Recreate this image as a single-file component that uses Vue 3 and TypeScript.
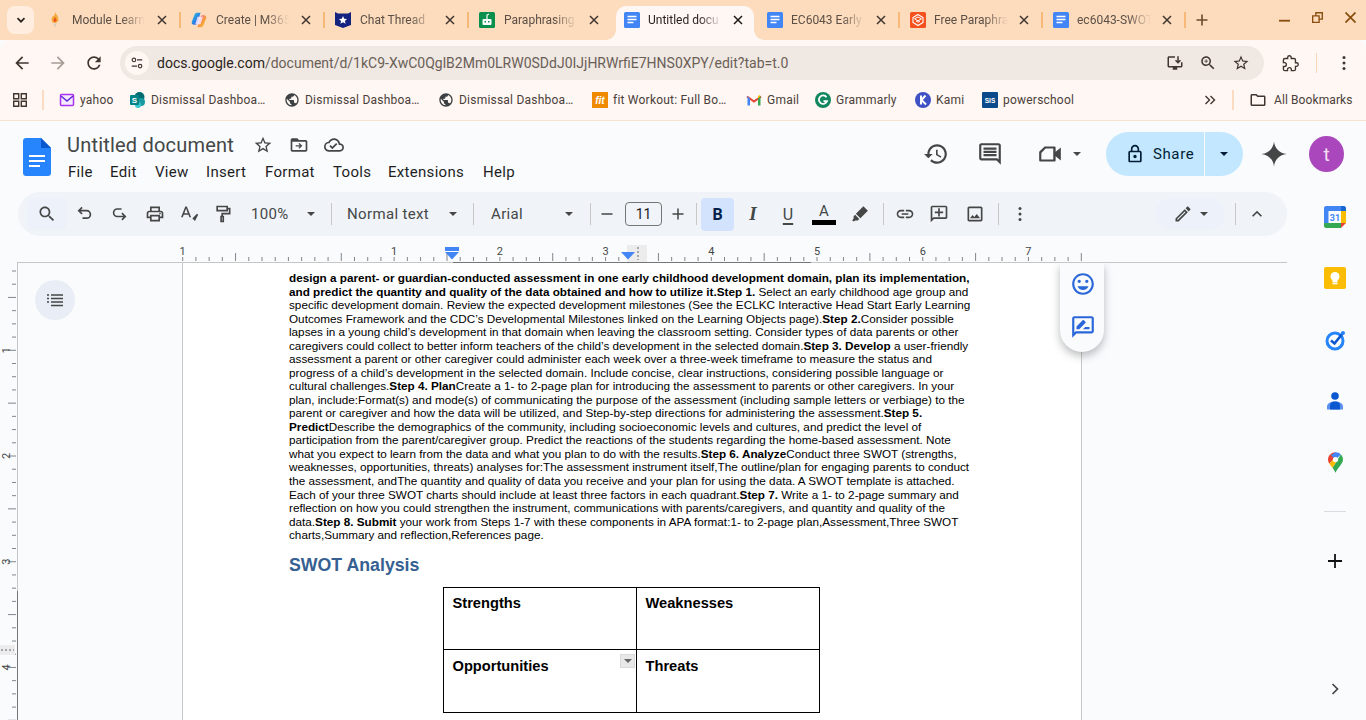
<script setup lang="ts">
const P = {
  back: 'M20 11H7.83l5.59-5.59L12 4l-8 8 8 8 1.41-1.41L7.83 13H20v-2z',
  fwd: 'M12 4l-1.41 1.41L16.17 11H4v2h12.17l-5.58 5.59L12 20l8-8z',
  reload: 'M17.65 6.35C16.2 4.9 14.21 4 12 4c-4.42 0-7.99 3.58-7.99 8s3.57 8 7.99 8c3.73 0 6.84-2.55 7.73-6h-2.08c-.82 2.33-3.04 4-5.65 4-3.31 0-6-2.69-6-6s2.69-6 6-6c1.66 0 3.14.69 4.22 1.78L13 11h7V4l-2.35 2.35z',
  star: 'M22 9.24l-7.19-.62L12 2 9.19 8.63 2 9.24l5.46 4.73L5.82 21 12 17.27 18.18 21l-1.63-7.03L22 9.24zM12 15.4l-3.76 2.27 1-4.28-3.32-2.88 4.38-.38L12 6.1l1.71 4.04 4.38.38-3.32 2.88 1 4.28L12 15.4z',
  search: 'M15.5 14h-.79l-.28-.27C15.41 12.59 16 11.11 16 9.5 16 5.91 13.09 3 9.5 3S3 5.91 3 9.5 5.91 16 9.5 16c1.61 0 3.09-.59 4.23-1.57l.27.28v.79l5 4.99L20.49 19l-4.99-5zm-6 0C7.01 14 5 11.99 5 9.5S7.01 5 9.5 5 14 7.01 14 9.5 11.99 14 9.5 14z',
  print: 'M19 8h-1V3H6v5H5c-1.66 0-3 1.34-3 3v6h4v4h12v-4h4v-6c0-1.66-1.34-3-3-3zM8 5h8v3H8V5zm8 12v2H8v-4h8v2zm2-2v-2H6v2H4v-4c0-.55.45-1 1-1h14c.55 0 1 .45 1 1v4h-2z',
  spell: 'M12.45 16h2.09L9.43 3H7.57L2.46 16h2.09l1.12-3h5.64l1.14 3zm-6.02-5L8.5 5.48 10.57 11H6.43zm15.16.59l-8.09 8.09L17.5 16l-1.41 1.41 3.09 3.09L23 13l-1.41-1.41z',
  link: 'M3.9 12c0-1.71 1.39-3.1 3.1-3.1h4V7H7c-2.76 0-5 2.24-5 5s2.24 5 5 5h4v-1.9H7c-1.71 0-3.1-1.39-3.1-3.1zM8 13h8v-2H8v2zm9-6h-4v1.9h4c1.71 0 3.1 1.39 3.1 3.1s-1.39 3.1-3.1 3.1h-4V17h4c2.76 0 5-2.24 5-5s-2.24-5-5-5z',
  addc: 'M2 4c0-1.1.9-2 2-2h16c1.1 0 2 .9 2 2v12c0 1.1-.9 2-2 2H6l-4 4V4zm2 13.17L5.17 16H20V4H4v13.17zM13 5h-2v4H7v2h4v4h2v-4h4V9h-4z',
  image: 'M19 5v14H5V5h14m0-2H5c-1.1 0-2 .9-2 2v14c0 1.1.9 2 2 2h14c1.1 0 2-.9 2-2V5c0-1.1-.9-2-2-2zm-4.86 8.86l-3 3.87L9 13.14 6 17h12l-3.86-5.14z',
  edit: 'M3 17.25V21h3.75L17.81 9.94l-3.75-3.75L3 17.25zM5.92 19H5v-.92l9.06-9.06.92.92L5.92 19zM20.71 5.63l-2.34-2.34c-.2-.2-.45-.29-.71-.29s-.51.1-.7.29l-1.83 1.83 3.75 3.75 1.83-1.83c.39-.39.39-1.02 0-1.41z',
  up: 'M12 8l-6 6 1.41 1.41L12 10.83l4.59 4.58L18 14z',
  history: 'M13 3c-4.97 0-9 4.03-9 9H1l3.89 3.89.07.14L9 12H6c0-3.87 3.13-7 7-7s7 3.13 7 7-3.13 7-7 7c-1.93 0-3.68-.79-4.94-2.06l-1.42 1.42C8.27 19.99 10.51 21 13 21c4.97 0 9-4.03 9-9s-4.03-9-9-9zm-1 5v5l4.28 2.54.72-1.21-3.5-2.08V8H12z',
  comment: 'M21.99 4c0-1.1-.89-2-1.99-2H4c-1.1 0-2 .9-2 2v12c0 1.1.9 2 2 2h14l4 4-.01-18zM20 4v13.17L18.83 16H4V4h16zM6 12h12v2H6zm0-3h12v2H6zm0-3h12v2H6z',
  lock: 'M18 8h-1V6c0-2.76-2.24-5-5-5S7 3.24 7 6v2H6c-1.1 0-2 .9-2 2v10c0 1.1.9 2 2 2h12c1.1 0 2-.9 2-2V10c0-1.1-.9-2-2-2zM9 6c0-1.66 1.34-3 3-3s3 1.34 3 3v2H9V6zm9 14H6V10h12v10zm-6-3c1.1 0 2-.9 2-2s-.9-2-2-2-2 .9-2 2 .9 2 2 2z',
  gem: 'M12 2C12.5 7.5 16.5 11.5 22 12 16.5 12.5 12.5 16.5 12 22 11.5 16.5 7.5 12.5 2 12 7.5 11.5 11.5 7.5 12 2z',
  folderMove: 'M20 6h-8l-2-2H4c-1.1 0-2 .9-2 2v12c0 1.1.9 2 2 2h16c1.1 0 2-.9 2-2V8c0-1.1-.9-2-2-2zm0 12H4V8h16v10zM12.5 9.5l-1.1 1.1 1.6 1.6H8v1.6h5l-1.6 1.6 1.1 1.1 3.5-3.5z',
  cloud: 'M19.35 10.04C18.67 6.59 15.64 4 12 4 9.11 4 6.6 5.64 5.35 8.04 2.34 8.36 0 10.91 0 14c0 3.31 2.69 6 6 6h13c2.76 0 5-2.24 5-5 0-2.64-2.05-4.78-4.65-4.96zM19 18H6c-2.21 0-4-1.79-4-4 0-2.05 1.53-3.76 3.56-3.97l1.07-.11.5-.95C8.08 7.14 9.94 6 12 6c2.62 0 4.88 1.86 5.39 4.43l.3 1.5 1.53.11c1.56.1 2.78 1.41 2.78 2.96 0 1.65-1.35 3-3 3zm-9-1l6.01-6.01-1.41-1.41L10 14.18l-2.09-2.09L6.5 13.5z',
  emoji: 'M11.99 2C6.47 2 2 6.48 2 12s4.47 10 9.99 10C17.52 22 22 17.52 22 12S17.52 2 11.99 2zM12 20c-4.42 0-8-3.58-8-8s3.58-8 8-8 8 3.58 8 8-3.58 8-8 8zm3.5-9c.83 0 1.5-.67 1.5-1.5S16.33 8 15.5 8 14 8.67 14 9.5s.67 1.5 1.5 1.5zm-7 0c.83 0 1.5-.67 1.5-1.5S9.33 8 8.5 8 7 8.67 7 9.5 7.67 11 8.5 11zm3.5 6.5c2.33 0 4.31-1.46 5.11-3.5H6.89c.8 2.04 2.78 3.5 5.11 3.5z',
  review: 'M20 2H4c-1.1 0-2 .9-2 2v18l4-4h14c1.1 0 2-.9 2-2V4c0-1.1-.9-2-2-2zm0 14H5.17L4 17.17V4h16v12zM6 14v-2.5l5.9-5.9c.2-.2.5-.2.7 0l1.8 1.8c.2.2.2.5 0 .7L8.5 14H6zm6 0l2-2h4v2h-6z',
  globe: 'M12 2C6.48 2 2 6.48 2 12s4.48 10 10 10 10-4.48 10-10S17.52 2 12 2zm-1 17.93c-3.95-.49-7-3.85-7-7.93 0-.62.08-1.21.21-1.79L9 15v1c0 1.1.9 2 2 2v1.93zm6.9-2.54c-.26-.81-1-1.39-1.9-1.39h-1v-3c0-.55-.45-1-1-1H8v-2h2c.55 0 1-.45 1-1V7h2c1.1 0 2-.9 2-2v-.41c2.93 1.19 5 4.06 5 7.41 0 2.08-.8 3.97-2.1 5.39z',
  bmFolder: 'M20 6h-8l-2-2H4c-1.1 0-2 .9-2 2v12c0 1.1.9 2 2 2h16c1.1 0 2-.9 2-2V8c0-1.1-.9-2-2-2zm0 12H4V6h5.17l2 2H20v10z',
  install: 'M20 3H4c-1.1 0-2 .9-2 2v11c0 1.1.9 2 2 2h5v3h6v-3h5c1.1 0 2-.9 2-2v-5h-2v5H4V5h8V3h8zm-4 10l4-4-1.4-1.4L17 9.2V3h-2v6.2l-1.6-1.6L12 9z',
  zoom: 'M15.5 14h-.79l-.28-.27C15.41 12.59 16 11.11 16 9.5 16 5.91 13.09 3 9.5 3S3 5.91 3 9.5 5.91 16 9.5 16c1.61 0 3.09-.59 4.23-1.57l.27.28v.79l5 4.99L20.49 19l-4.99-5zm-6 0C7.01 14 5 11.99 5 9.5S7.01 5 9.5 5 14 7.01 14 9.5 11.99 14 9.5 14zM12 10h-2v2H9v-2H7V9h2V7h1v2h2v1z',
}

interface Tab { title: string; icon: string; active?: boolean; sep: boolean }
const tabs: Tab[] = [
  { title: 'Module Learn', icon: 'flame', sep: true },
  { title: 'Create | M365', icon: 'copilot', sep: true },
  { title: 'Chat Thread', icon: 'shield', sep: true },
  { title: 'Paraphrasing', icon: 'robot', sep: false },
  { title: 'Untitled docu', icon: 'doc', active: true, sep: false },
  { title: 'EC6043 Early', icon: 'doc', sep: true },
  { title: 'Free Paraphra', icon: 'free', sep: true },
  { title: 'ec6043-SWOT', icon: 'doc', sep: true },
]

interface Bm { label: string; icon: string; w: number }
const bookmarks: Bm[] = [
  { label: 'yahoo', icon: 'mail', w: 71 },
  { label: 'Dismissal Dashboa…', icon: 'sp', w: 154 },
  { label: 'Dismissal Dashboa…', icon: 'globe', w: 154 },
  { label: 'Dismissal Dashboa…', icon: 'globe', w: 154 },
  { label: 'fit Workout: Full Bo…', icon: 'fit', w: 154 },
  { label: 'Gmail', icon: 'gmail', w: 69 },
  { label: 'Grammarly', icon: 'gram', w: 100 },
  { label: 'Kami', icon: 'kami', w: 67 },
  { label: 'powerschool', icon: 'sis', w: 100 },
]

const menu = [
  { t: 'File', w: 42 }, { t: 'Edit', w: 45 }, { t: 'View', w: 51 }, { t: 'Insert', w: 59 },
  { t: 'Format', w: 68 }, { t: 'Tools', w: 55 }, { t: 'Extensions', w: 95 }, { t: 'Help', w: 40 },
]

const STEP = 13.215
const hTicks = Array.from({ length: 69 }, (_, k) => ({
  x: 182.7 + STEP * k,
  tall: k % 4 === 0 && k % 8 !== 0,
  label: k % 8 === 0 && k !== 8 ? String(Math.abs(k / 8 - 1)) : '',
}))
const vTicks = Array.from({ length: 35 }, (_, k) => ({
  y: 8 + STEP * k,
  tall: (k + 2) % 4 === 0,
  label: (k + 2) % 8 === 0 ? String((k + 2) / 8) : '',
}))

const raw = [
  '*design a parent- or guardian-conducted assessment in one early childhood development domain, plan its implementation,*',
  '*and predict the quantity and quality of the data obtained and how to utilize it.Step 1.* Select an early childhood age group and',
  'specific development domain. Review the expected development milestones (See the ECLKC Interactive Head Start Early Learning',
  'Outcomes Framework and the CDC’s Developmental Milestones linked on the Learning Objects page).*Step 2.*Consider possible',
  'lapses in a young child’s development in that domain when leaving the classroom setting. Consider types of data parents or other',
  'caregivers could collect to better inform teachers of the child’s development in the selected domain.*Step 3. Develop* a user-friendly',
  'assessment a parent or other caregiver could administer each week over a three-week timeframe to measure the status and',
  'progress of a child’s development in the selected domain. Include concise, clear instructions, considering possible language or',
  'cultural challenges.*Step 4. Plan*Create a 1- to 2-page plan for introducing the assessment to parents or other caregivers. In your',
  'plan, include:Format(s) and mode(s) of communicating the purpose of the assessment (including sample letters or verbiage) to the',
  'parent or caregiver and how the data will be utilized, and Step-by-step directions for administering the assessment.*Step 5.*',
  '*Predict*Describe the demographics of the community, including socioeconomic levels and cultures, and predict the level of',
  'participation from the parent/caregiver group. Predict the reactions of the students regarding the home-based assessment. Note',
  'what you expect to learn from the data and what you plan to do with the results.*Step 6. Analyze*Conduct three SWOT (strengths,',
  'weaknesses, opportunities, threats) analyses for:The assessment instrument itself,The outline/plan for engaging parents to conduct',
  'the assessment, andThe quantity and quality of data you receive and your plan for using the data. A SWOT template is attached.',
  'Each of your three SWOT charts should include at least three factors in each quadrant.*Step 7.* Write a 1- to 2-page summary and',
  'reflection on how you could strengthen the instrument, communications with parents/caregivers, and quantity and quality of the',
  'data.*Step 8. Submit* your work from Steps 1-7 with these components in APA format:1- to 2-page plan,Assessment,Three SWOT',
  'charts,Summary and reflection,References page.',
]
const lines = raw.map((l) => l.split('*').map((t, i) => ({ t, b: i % 2 === 1 })))
</script>

<template>
  <div class="root">
    <!-- Browser tab strip -->
    <div class="strip">
      <div class="tabmenu">
        <svg viewBox="0 0 12 12" class="s12"><path d="M2.5 4.2 6 7.7l3.5-3.5" fill="none" stroke="#2b2320" stroke-width="1.7" /></svg>
      </div>
      <div v-for="(t, i) in tabs" :key="t.title" class="tab" :class="{ active: t.active, sep: t.sep, narrow: i > 4, lead: i < 4 }">
        <svg v-if="t.icon === 'flame'" class="fav" viewBox="0 0 16 16">
          <path d="M8.500 0c.3 2.400 2.900 3.800 2.900 7.200A3.400 3.400 0 0 1 8 11 3.500 3.500 0 0 1 4.600 7.300c0-1.500.9-2.200 1.200-3.300C6.900 4.600 8 2.600 8.500 0z" fill="#f5ab3c" />
          <path d="M8 4.800c.3 1.200 1.500 1.900 1.500 3.500A1.500 1.500 0 0 1 8 9.900a1.600 1.600 0 0 1-1.500-1.700C6.500 6.800 7.700 6.200 8 4.800z" fill="#e8571f" />
          <path d="M6 11.500h4L8 15.500z" fill="#d9cdbd" />
        </svg>
        <svg v-else-if="t.icon === 'copilot'" class="fav" viewBox="0 0 16 16">
          <defs>
            <linearGradient id="cpa" x1="0" y1="0" x2="1" y2="1"><stop offset="0" stop-color="#28c8d8" /><stop offset=".6" stop-color="#2f7be8" /><stop offset="1" stop-color="#7a5cf0" /></linearGradient>
            <linearGradient id="cpb" x1="0" y1="0" x2="1" y2="1"><stop offset="0" stop-color="#ef5fa8" /><stop offset=".55" stop-color="#f79a3c" /><stop offset="1" stop-color="#f7d23c" /></linearGradient>
          </defs>
          <path d="M3.600 2.500C4 1.300 5 .8 6 .8h3.500L6.500 11c-.4 1.200-1.200 1.800-2.300 1.800H3C1.300 12.800.3 11.300.8 9.700z" fill="url(#cpa)" />
          <path d="M12.400 13.500c-.4 1.200-1.400 1.700-2.400 1.700H6.500L9.500 5c.4-1.200 1.200-1.800 2.300-1.800H13c1.700 0 2.700 1.500 2.200 3.100z" fill="url(#cpb)" />
          <path d="M6.500 4.800h5.500l-2.500 7.500H4.300z" fill="#f4e6ff" opacity=".85" />
        </svg>
        <svg v-else-if="t.icon === 'shield'" class="fav" viewBox="0 0 16 16">
          <path d="M0 0l3 1.500h10L16 0v13l-8 3-8-3z" fill="#14237f" />
          <path d="M8 4l1.200 2.700 2.900.3-2.200 1.900.7 2.900L8 10.300l-2.600 1.500.7-2.900L3.900 7l2.900-.3z" fill="#fff" />
        </svg>
        <svg v-else-if="t.icon === 'robot'" class="fav" viewBox="0 0 16 16">
          <rect width="16" height="16" rx="1.500" fill="#0b8f4d" />
          <rect x="3.500" y="7" width="9" height="6" rx="1" fill="#fff" />
          <rect x="5.500" y="9" width="1.500" height="1.500" fill="#0b8f4d" /><rect x="9" y="9" width="1.500" height="1.500" fill="#0b8f4d" />
          <path d="M8 7V3l2-1" stroke="#fff" stroke-width="1.200" fill="none" />
        </svg>
        <svg v-else-if="t.icon === 'free'" class="fav" viewBox="0 0 16 16">
          <rect width="16" height="16" rx="1.500" fill="#f4511e" />
          <path d="M8 2.500 13 5.500v5L8 13.500 3 10.500v-5z" fill="none" stroke="#fff" stroke-width="1.100" />
          <path d="M4.500 6.800 8 5l3.500 1.800L8 8.800zM6 9l2 1.200L10 9" fill="none" stroke="#fff" stroke-width="1" />
        </svg>
        <svg v-else class="fav" viewBox="0 0 16 16">
          <rect width="16" height="16" rx="1.500" y="0" fill="#4285f4" />
          <path d="M3.500 4.500h9M3.500 7.500h9M3.500 10.500h6" stroke="#fff" stroke-width="1.500" />
        </svg>
        <span class="ttl">{{ t.title }}</span>
        <svg class="x" viewBox="0 0 10 10"><path d="M1 1l8 8M9 1l-8 8" stroke="currentColor" stroke-width="1.500" /></svg>
      </div>
      <svg class="newtab" viewBox="0 0 12 12"><path d="M6 .5v11M.5 6h11" stroke="#6b4a2c" stroke-width="1.600" /></svg>
      <div class="winctl">
        <svg viewBox="0 0 12 12" class="w11"><path d="M0 9.500h12" stroke="#8a4f10" stroke-width="2" /></svg>
        <svg viewBox="0 0 12 12" class="w11"><path d="M3.500 0H12v8.500H8.500V12H0V3.500h3.500zM5 1.500v2h3.500v3.500H10.500V1.500zM1.500 5v5.500H7V5z" fill="#8a4f10" fill-rule="evenodd" /></svg>
        <svg viewBox="0 0 12 12" class="w11"><path d="M.5.5l11 11M11.500.5l-11 11" stroke="#8a4f10" stroke-width="1.900" /></svg>
      </div>
    </div>

    <!-- Address bar -->
    <div class="nav">
      <svg class="i20 c-nav first" viewBox="0 0 24 24"><path :d="P.back" /></svg>
      <svg class="i20 c-dim" viewBox="0 0 24 24"><path :d="P.fwd" /></svg>
      <svg class="i20 c-nav" viewBox="0 0 24 24"><path :d="P.reload" /></svg>
      <div class="omni">
        <span class="tune">
          <svg viewBox="0 0 16 16" class="s14"><circle cx="4.500" cy="4.500" r="2" fill="none" stroke="#3f3630" stroke-width="1.300" /><path d="M8 4.500h6M2 11.500h6" stroke="#3f3630" stroke-width="1.300" /><circle cx="11.500" cy="11.500" r="2" fill="none" stroke="#3f3630" stroke-width="1.300" /></svg>
        </span>
        <span class="url"><span class="dom">docs.google.com</span>/document/d/1kC9-XwC0QglB2Mm0LRW0SDdJ0IJjHRWrfiE7HNS0XPY/edit?tab=t.0</span>
        <svg class="i18 c-nav" viewBox="0 0 24 24"><path :d="P.install" /></svg>
        <svg class="i18 c-nav oi" viewBox="0 0 24 24"><path :d="P.zoom" /></svg>
        <svg class="i18 c-nav oi" viewBox="0 0 24 24"><path :d="P.star" /></svg>
      </div>
      <svg class="ext" viewBox="0 0 24 24"><path d="M20.500 11H19V7c0-1.100-.9-2-2-2h-4V3.500C13 2.120 11.880 1 10.500 1S8 2.120 8 3.500V5H4c-1.100 0-2 .9-2 2v3.800h1.500c1.490 0 2.700 1.210 2.700 2.700s-1.210 2.700-2.700 2.700H2V20c0 1.100.9 2 2 2h3.800v-1.500c0-1.490 1.210-2.700 2.700-2.700s2.700 1.210 2.700 2.700V22H17c1.100 0 2-.9 2-2v-4h1.500c1.380 0 2.500-1.120 2.500-2.500S21.880 11 20.500 11z" fill="none" stroke="#3f3630" stroke-width="1.900" /></svg>
      <span class="navsep"></span>
      <svg class="dots" viewBox="0 0 4 16"><circle cx="2" cy="2.500" r="1.500" /><circle cx="2" cy="8" r="1.500" /><circle cx="2" cy="13.500" r="1.500" /></svg>
    </div>

    <!-- Bookmarks -->
    <div class="bm">
      <svg class="apps" viewBox="0 0 14 14"><path d="M.7.7h5v5h-5zM8.300.7h5v5h-5zM.7 8.300h5v5h-5zM8.300 8.300h5v5h-5z" fill="none" stroke="#3f3630" stroke-width="1.400" /></svg>
      <span class="bmsep s1"></span>
      <div v-for="(b, i) in bookmarks" :key="i" class="bmi" :style="{ width: b.w + 'px' }">
        <svg v-if="b.icon === 'mail'" class="fav" viewBox="0 0 16 16"><rect x="1.500" y="2.500" width="13" height="11" rx="1" fill="#f6eaff" stroke="#a933f0" stroke-width="1.500" /><path d="M2 4l6 5 6-5" fill="none" stroke="#5f2bd8" stroke-width="1.500" /></svg>
        <svg v-else-if="b.icon === 'sp'" class="fav" viewBox="0 0 16 16"><circle cx="9.500" cy="5" r="5" fill="#036c70" /><circle cx="11" cy="10" r="4" fill="#1a9ba1" /><circle cx="8" cy="13" r="3" fill="#37c6d0" /><rect y="3" width="9" height="10" rx="1" fill="#038387" /><text x="4.500" y="11" text-anchor="middle" class="svgs">S</text></svg>
        <svg v-else-if="b.icon === 'globe'" class="fav" viewBox="0 0 24 24"><path :d="P.globe" fill="#3c4043" /></svg>
        <svg v-else-if="b.icon === 'fit'" class="fav" viewBox="0 0 16 16"><rect width="16" height="16" fill="#f08a00" /><text x="8" y="12" text-anchor="middle" class="svgfit">fit</text></svg>
        <svg v-else-if="b.icon === 'gmail'" class="fav" viewBox="0 0 16 16"><path d="M1 4.500 8 9.500l7-5" fill="none" stroke="#ea4335" stroke-width="2" /><path d="M1.500 4v9.500h2.500V6.500z" fill="#4285f4" /><path d="M14.500 4v9.500H12V6.500z" fill="#34a853" /><path d="M12 6.500 14.500 4l-1-1L12 4z" fill="#fbbc04" /></svg>
        <svg v-else-if="b.icon === 'gram'" class="fav" viewBox="0 0 16 16"><circle cx="8" cy="8" r="8" fill="#11865f" /><path d="M11.500 5.200A4.200 4.200 0 1 0 12 9.200H8.500" fill="none" stroke="#fff" stroke-width="1.800" /></svg>
        <svg v-else-if="b.icon === 'kami'" class="fav" viewBox="0 0 16 16"><circle cx="8" cy="8" r="8" fill="#3f51c4" /><path d="M6 3.500v9M10.500 3.500 6.500 8l4.500 4.500" fill="none" stroke="#fff" stroke-width="2" /></svg>
        <svg v-else class="fav" viewBox="0 0 16 16"><rect width="16" height="16" rx="1" fill="#0b4a8a" /><text x="8" y="11" text-anchor="middle" class="svgsis">SIS</text></svg>
        <span class="bml">{{ b.label }}</span>
      </div>
      <svg class="more" viewBox="0 0 12 10"><path d="M1.500 1l4 4-4 4M6.500 1l4 4-4 4" fill="none" stroke="#3f3630" stroke-width="1.400" /></svg>
      <span class="bmsep s2"></span>
      <svg class="i18 c-nav" viewBox="0 0 24 24"><path :d="P.bmFolder" /></svg>
      <span class="bml all">All Bookmarks</span>
    </div>

    <!-- Docs title area -->
    <header class="head">
      <svg class="logo" viewBox="0 0 28 38">
        <path d="M18 0H3C1.300 0 0 1.300 0 3v32c0 1.700 1.300 3 3 3h22c1.700 0 3-1.300 3-3V10z" fill="#2684fc" />
        <path d="M18 0v10h10z" fill="#0b57d0" />
        <path d="M6 17h16v2H6zM6 22h16v2H6zM6 27h11v2H6z" fill="#fff" />
      </svg>
      <div class="titles">
        <div class="trow">
          <span class="title">Untitled document</span>
          <svg class="i20 c-g" viewBox="0 0 24 24"><path :d="P.star" /></svg>
          <svg class="i20 c-g folder" viewBox="0 0 24 24"><path :d="P.folderMove" /></svg>
          <svg class="i20 c-g cloud" viewBox="0 0 24 24"><path :d="P.cloud" /></svg>
        </div>
        <nav class="menu">
          <span v-for="m in menu" :key="m.t" :style="{ width: m.w + 'px' }">{{ m.t }}</span>
        </nav>
      </div>
      <div class="hright">
        <svg class="i26 c-g" viewBox="0 0 24 24"><path :d="P.history" /></svg>
        <svg class="i26 c-g hc" viewBox="0 0 24 24"><path :d="P.comment" /></svg>
        <svg class="i26 c-g hm" viewBox="0 0 24 24"><path d="M7 5H16c.7 0 1.200.5 1.200 1.200V10L22 6v12l-4.800-4v3.800c0 .7-.5 1.200-1.200 1.200H3.200C2.500 19 2 18.500 2 17.800V10zM8 7 4 11v6h11V7z" fill-rule="evenodd" /></svg>
        <span class="caret hcar"></span>
        <div class="share">
          <div class="sh-main">
            <svg class="i20 c-sh" viewBox="0 0 24 24"><path :d="P.lock" /></svg>
            <span>Share</span>
          </div>
          <div class="sh-arrow"><span class="caret dark"></span></div>
        </div>
        <svg class="gem c-g" viewBox="0 0 24 24"><path :d="P.gem" /></svg>
        <div class="avatar">t</div>
      </div>
    </header>

    <div class="workspace">
      <div class="main">
        <!-- Formatting toolbar -->
        <div class="toolbar">
          <div class="b w40 hl"><svg class="i20 c-g" viewBox="0 0 24 24"><path :d="P.search" /></svg></div>
          <div class="b w36"><svg class="i20" viewBox="0 0 24 24"><path class="ln" d="M8.500 4 4.500 8l4 4M4.500 8H14a4.500 4.500 0 0 1 0 9h-5" /></svg></div>
          <div class="b w32"><svg class="i20" viewBox="0 0 24 24"><path class="ln" d="M15.500 9l4 4-4 4M19.500 13H10a4.500 4.500 0 0 1 0-9h5" transform="translate(0 2)" /></svg></div>
          <div class="b w40"><svg class="i20 c-g" viewBox="0 0 24 24"><path :d="P.print" /><circle cx="18" cy="11.500" r="1" /></svg></div>
          <div class="b w28"><svg class="i20 c-g" viewBox="0 0 24 24"><path :d="P.spell" /></svg></div>
          <div class="b w40"><svg class="i20" viewBox="0 0 24 24"><path class="ln" d="M5 3h12v5H5zM17 5.500h3v6h-9V15M9.700 15h2.600v6H9.700z" /></svg></div>
          <span class="lbl zoomv">100%</span>
          <span class="caret c1"></span>
          <span class="sep a1"></span>
          <span class="lbl style">Normal text</span>
          <span class="caret c2"></span>
          <span class="sep a2"></span>
          <span class="lbl font">Arial</span>
          <span class="caret c3"></span>
          <span class="sep a3"></span>
          <div class="b w20 m6"><svg class="s12" viewBox="0 0 12 12"><path d="M.5 6h11" stroke="#444746" stroke-width="1.500" /></svg></div>
          <div class="fsize">11</div>
          <div class="b w20 m6"><svg class="s12" viewBox="0 0 12 12"><path d="M.5 6h11M6 .5v11" stroke="#444746" stroke-width="1.500" /></svg></div>
          <span class="sep m8"></span>
          <div class="bold">B</div>
          <div class="b w34 m2 glyph it">I</div>
          <div class="b w34 m1 glyph un">U</div>
          <div class="b w34 m2 colorA"><span>A</span><i></i></div>
          <div class="b w34 m2"><svg class="i18 c-g" viewBox="0 0 24 24"><path d="M16.500 1.500 22.500 7.500 12.500 17.500 6.500 11.500zM5.500 13l5.500 5.500-2 2H5.500L4 22l-2.500-1.500L3.500 18v-3z" /></svg></div>
          <span class="sep m6"></span>
          <div class="b w34 m4"><svg class="i20 c-g" viewBox="0 0 24 24"><path :d="P.link" /></svg></div>
          <div class="b w34"><svg class="i20 c-g" viewBox="0 0 24 24"><path :d="P.addc" /></svg></div>
          <div class="b w34 m2"><svg class="i20 c-g" viewBox="0 0 24 24"><path :d="P.image" /></svg></div>
          <span class="sep m6"></span>
          <div class="b w34 m4"><svg class="dots tbdots" viewBox="0 0 4 16"><circle cx="2" cy="2.500" r="1.500" /><circle cx="2" cy="8" r="1.500" /><circle cx="2" cy="13.500" r="1.500" /></svg></div>
          <div class="mode">
            <svg class="i20 c-g" viewBox="0 0 24 24"><path :d="P.edit" /></svg>
            <span class="caret"></span>
          </div>
          <span class="sep m10"></span>
          <div class="b w34 m4"><svg class="i20 c-g" viewBox="0 0 24 24"><path :d="P.up" /></svg></div>
        </div>

        <!-- Horizontal ruler -->
        <div class="hruler">
          <svg width="1287" height="18" viewBox="0 0 1287 18">
            <line x1="17" y1="17.500" x2="1287" y2="17.500" stroke="#c7c7c7" />
            <line x1="453" y1="17.500" x2="811" y2="17.500" stroke="#747775" />
            <g v-for="t in hTicks" :key="t.x">
              <line :x1="t.x" :x2="t.x" :y1="t.tall ? 8 : 12" y2="16" stroke="#80868b" />
              <text v-if="t.label" :x="t.x" y="10" text-anchor="middle" class="rnum">{{ t.label }}</text>
            </g>
            <path d="M445 2h14v4h-14z" fill="#4285f4" />
            <path d="M445 7h14l-7 7.500z" fill="#4285f4" />
            <rect x="627" y="0" width="20" height="17" fill="#ececec" />
            <path d="M638 2v13" stroke="#5f6368" stroke-dasharray="2 2" />
            <path d="M621 7h14l-7 7.500z" fill="#4285f4" />
          </svg>
        </div>

        <div class="canvas">
          <div class="vruler">
            <svg width="18" height="457" viewBox="0 0 18 457">
              <line x1="17.500" y1="0" x2="17.500" y2="457" stroke="#c7c7c7" />
              <line x1="17.500" y1="328" x2="17.500" y2="457" stroke="#747775" />
              <g v-for="t in vTicks" :key="t.y">
                <line :y1="t.y" :y2="t.y" :x1="t.tall ? 8 : 12" x2="16" stroke="#80868b" />
                <text v-if="t.label" x="10" :y="t.y" text-anchor="middle" class="rnum" :transform="`rotate(-90 10 ${t.y})`">{{ t.label }}</text>
              </g>
              <rect x="0" y="382" width="15" height="10" fill="#ececec" />
              <path d="M1 387h13" stroke="#5f6368" stroke-dasharray="2 2" />
            </svg>
          </div>
          <div class="gutter">
            <div class="outline">
              <svg viewBox="0 0 18 14" class="olic"><path d="M5 2h12M5 5.500h12M5 9h12M5 12.500h12" stroke="#444746" stroke-width="1.500" /><path d="M1 2h2M1 5.500h2M1 9h2" stroke="#444746" stroke-width="1.500" /></svg>
            </div>
          </div>
          <div class="page">
            <div class="body">
              <div v-for="(l, i) in lines" :key="i" class="line">
                <span v-for="(s, j) in l" :key="j" :class="{ strong: s.b }">{{ s.t }}</span>
              </div>
            </div>
            <h2 class="h2">SWOT Analysis</h2>
            <div class="swot">
              <div class="cell">Strengths</div>
              <div class="cell r">Weaknesses</div>
              <div class="cell d opp">Opportunities
                <span class="cellmenu"><span class="caret tiny"></span></span>
              </div>
              <div class="cell r d">Threats</div>
            </div>
          </div>
          <div class="rgut">
            <span class="scroll"></span>
          </div>
          <div class="floater">
            <svg class="i26 c-blue" viewBox="0 0 24 24"><path :d="P.emoji" /></svg>
            <svg class="i26 c-blue" viewBox="0 0 24 24"><path :d="P.review" /></svg>
          </div>
        </div>
      </div>

      <!-- Side panel -->
      <aside class="side">
        <div class="si">
          <svg class="i22" viewBox="0 0 22 22">
            <rect width="22" height="22" rx="2" fill="#fff" />
            <path d="M0 5V2c0-1 1-2 2-2h15v5z" fill="#4285f4" />
            <path d="M17 0h3c1 0 2 1 2 2v3h-5z" fill="#1967d2" />
            <path d="M17 5h5v12h-5z" fill="#fbbc04" />
            <path d="M0 5h4.500v12H0z" fill="#4285f4" />
            <path d="M0 17h17v5H2c-1 0-2-1-2-2z" fill="#34a853" />
            <path d="M17 17h5l-5 5z" fill="#ea4335" />
            <text x="11" y="15" text-anchor="middle" class="cal">31</text>
          </svg>
        </div>
        <div class="si">
          <svg class="i22" viewBox="0 0 22 22">
            <rect width="22" height="22" rx="2" fill="#fbbc04" />
            <circle cx="11" cy="9.500" r="4.500" fill="#fff" />
            <rect x="8.500" y="12" width="5" height="3" fill="#fff" />
            <rect x="8.500" y="15.500" width="5" height="1.800" fill="#fff" />
          </svg>
        </div>
        <div class="si">
          <svg class="i22" viewBox="0 0 22 22">
            <circle cx="11" cy="12" r="8" fill="none" stroke="#2684fc" stroke-width="3" />
            <path d="M7 11.500l3.500 3L19 4" fill="none" stroke="#0b57d0" stroke-width="2.600" />
            <circle cx="19" cy="4" r="2" fill="#2684fc" />
          </svg>
        </div>
        <div class="si">
          <svg class="i22" viewBox="0 0 22 22">
            <circle cx="11" cy="6" r="3.800" fill="#0b57d0" />
            <path d="M3 19.500v-3c0-3 3.500-5 8-5s8 2 8 5v3z" fill="#5b8ff0" />
            <path d="M6 19.500v-4c0-2.500 2-4 5-4s5 1.500 5 4v4z" fill="#0b57d0" />
          </svg>
        </div>
        <div class="si">
          <svg class="pin" viewBox="0 0 16 22">
            <path d="M8 0C3.600 0 0 3.500 0 7.800c0 1.800.6 3.300 1.500 4.500L8 5.500z" fill="#ea4335" />
            <path d="M8 0c2.300 0 4.300.9 5.700 2.400L8 8 3 3z" fill="#4285f4" />
            <path d="M13.700 2.400C15.100 3.800 16 5.700 16 7.800c0 4.700-5.800 8.700-8 14.200-.8-2-2-3.800-3.200-5.400z" fill="#34a853" />
            <path d="M1.500 12.300 8 5.500l2 3-5.200 8.100c-1.300-1.400-2.500-2.800-3.300-4.300z" fill="#fbbc04" />
            <circle cx="8" cy="7.800" r="2.800" fill="#fff" />
          </svg>
        </div>
        <span class="sdiv"></span>
        <div class="si plus"><svg class="s14" viewBox="0 0 14 14"><path d="M7 0v14M0 7h14" stroke="#111" stroke-width="1.800" /></svg></div>
        <div class="si chev"><svg class="s10" viewBox="0 0 10 12"><path d="M2.500 1 7.500 6l-5 5" fill="none" stroke="#444746" stroke-width="1.700" /></svg></div>
      </aside>
    </div>
  </div>
</template>

<style>
html, body { margin: 0; overflow: hidden; background: #f9fbfd; }
</style>

<style scoped>
.root { width: 1366px; height: 720px; overflow: hidden; background: #f9fbfd; font-family: Roboto, "Liberation Sans", sans-serif; display: flex; flex-direction: column; }
svg { display: block; flex: none; }
.w11 { width: 11px; height: 11px; }
.s10 { width: 10px; height: 12px; }
.s12 { width: 12px; height: 12px; }
.s14 { width: 14px; height: 14px; }
.i18 { width: 18px; height: 18px; }
.i20 { width: 20px; height: 20px; }
.i22 { width: 22px; height: 22px; }
.i26 { width: 26px; height: 26px; }
.c-nav { fill: #3f3630; }
.c-dim { fill: #a69d96; }
.c-g { fill: #444746; }
.c-sh { fill: #001d35; }
.c-blue { fill: #2a67d8; }
.ln { fill: none; stroke: #444746; stroke-width: 2; }

/* tab strip */
.strip { height: 40px; background: #fddcbd; display: flex; align-items: flex-start; flex: none; }
.tabmenu { width: 27px; height: 28px; margin: 6px 3px 0 7px; border-radius: 8px; background: #ffeee0; display: flex; align-items: center; justify-content: center; flex: none; }
.tab { width: 144px; height: 40px; position: relative; display: flex; align-items: center; flex: none; color: #5b4f46; font-size: 12px; }
.tab.narrow { width: 143px; }
.fav { width: 16px; height: 16px; flex: none; }
.tab .fav { margin-left: 10px; }
.tab .ttl { width: 77px; margin-left: 8px; white-space: nowrap; overflow: hidden; -webkit-mask-image: linear-gradient(90deg, #000 66%, transparent 96%); mask-image: linear-gradient(90deg, #000 66%, transparent 96%); }
.tab.lead .ttl { width: 76px; margin-left: 9px; }
.tab .x { width: 10px; height: 10px; margin-left: 9px; color: #3f3630; }
.tab.narrow .x { margin-left: 8px; }
.tab.sep::after { content: ""; position: absolute; right: 0; top: 12px; width: 2px; height: 16px; background: #f7b878; }
.tab.active { color: #2b2320; }
.tab.active::before { content: ""; position: absolute; left: 3px; right: 3.500px; top: 6px; bottom: 0; background: #fff7f3; border-radius: 10px 10px 0 0; }
.tab.active::after { content: ""; position: absolute; left: -7px; right: -6.500px; bottom: 0; height: 10px; background: radial-gradient(circle at 0 0, transparent 9.500px, #fff7f3 10px) left bottom / 10px 10px no-repeat, radial-gradient(circle at 100% 0, transparent 9.500px, #fff7f3 10px) right bottom / 10px 10px no-repeat; }
.tab > * { position: relative; z-index: 1; }
.tab.active .fav { margin-left: 11px; }
.tab.active .x { margin-left: 8px; color: #1d1a18; }
.newtab { width: 12px; height: 12px; margin: 14px 0 0 10px; }
.winctl { display: flex; gap: 22px; margin: 12px 0 0 auto; padding-right: 10px; }

/* nav */
.nav { height: 40px; box-sizing: border-box; padding-top: 6px; background: #fff7f3; border-radius: 10px 10px 0 0; display: flex; align-items: center; flex: none; }
.nav .first { margin-left: 12px; }
.nav .c-dim { margin-left: 16px; }
.nav > .c-nav:nth-child(3) { margin-left: 16px; }
.omni { width: 1144px; height: 34px; margin-left: 16px; background: #f0e8e3; border-radius: 17px; display: flex; align-items: center; box-sizing: border-box; padding-left: 5px; flex: none; }
.tune { width: 24px; height: 24px; background: #fff7f3; border-radius: 50%; display: flex; align-items: center; justify-content: center; }
.url { margin-left: 8px; font-size: 14px; color: #6a5f57; white-space: nowrap; width: 1009px; }
.url .dom { color: #2b2320; }
.oi { margin-left: 15px; }
.ext { width: 17px; height: 17px; margin-left: 18px; }
.navsep { width: 1px; height: 20px; background: #f6d6b8; margin-left: 17px; }
.dots { width: 4px; height: 16px; fill: #3f3630; margin-left: 25px; }

/* bookmarks */
.bm { height: 40px; background: #fff7f3; border-bottom: 1px solid #f5e2d0; display: flex; align-items: center; flex: none; }
.apps { width: 14px; height: 14px; margin-left: 13px; }
.bmsep { width: 2px; height: 20px; background: #fbdcc0; flex: none; }
.bmsep.s1 { margin: 0 15px; }
.bmi { display: flex; align-items: center; flex: none; gap: 5px; }
.bml { font-size: 12px; color: #4a403a; white-space: nowrap; letter-spacing: .22px; }
.more { width: 12px; height: 10px; margin-left: 122px; }
.bmsep.s2 { margin: 0 15px 0 16px; }
.all { margin-left: 7px; letter-spacing: .1px; }
.svgs { font: 700 8px "Liberation Sans", sans-serif; fill: #fff; }
.svgfit { font: italic 700 10px "Liberation Sans", sans-serif; fill: #fff; }
.svgsis { font: 700 6.500px "Liberation Sans", sans-serif; fill: #fff; }

/* header */
.head { height: 71px; display: flex; flex: none; position: relative; }
.logo { width: 28px; height: 38px; margin: 17px 0 0 23px; }
.titles { margin-left: 16px; padding-top: 10px; }
.trow { display: flex; align-items: center; height: 27px; }
.title { font-size: 20px; color: #444746; width: 186px; white-space: nowrap; letter-spacing: .01em; }
.folder { margin-left: 16px; }
.cloud { margin-left: 15px; }
.menu { display: flex; margin: 2px 0 0 1px; font-size: 15px; color: #1f1f1f; line-height: 24px; letter-spacing: .3px; }
.menu span { flex: none; white-space: nowrap; }
.hright { position: absolute; left: 923px; top: 11px; display: flex; align-items: center; height: 44px; }
.hc { margin-left: 28px; }
.hm { margin-left: 34px; }
.caret { width: 0; height: 0; border: 4.500px solid transparent; border-top-color: #444746; border-bottom-width: 0; flex: none; display: block; }
.hcar { margin-left: 10px; }
.share { width: 137px; height: 44px; margin-left: 25px; border-radius: 22px; background: #c2e7ff; display: flex; }
.sh-main { width: 99px; display: flex; align-items: center; color: #001d35; font-size: 15px; box-sizing: border-box; padding-left: 19px; gap: 8px; border-right: 1px solid #f9fbfd; letter-spacing: .6px; }
.sh-arrow { flex: 1; display: flex; align-items: center; justify-content: center; }
.caret.dark { border-top-color: #001d35; }
.gem { width: 30px; height: 30px; margin-left: 16px; }
.avatar { width: 35px; height: 36px; margin-left: 20px; border-radius: 50%; background: #ab47bc; color: #f3e0f6; font-size: 19px; display: flex; align-items: center; justify-content: center; }

/* workspace */
.workspace { flex: 1; display: flex; min-height: 0; }
.main { width: 1288px; display: flex; flex-direction: column; flex: none; }
.side { flex: 1; display: flex; flex-direction: column; align-items: center; padding-left: 16px; box-sizing: border-box; height: 528px; }
.si { height: 50px; display: flex; align-items: center; justify-content: center; margin-bottom: 11.250px; flex: none; }
.pin { width: 15px; height: 21px; }
.sdiv { width: 22px; height: 1px; background: #dadce0; margin-top: 13px; flex: none; }
.plus { margin-top: 24px; margin-bottom: 0; }
.chev { margin-top: auto; margin-bottom: 6px; }

/* toolbar */
.toolbar { width: 1269px; height: 44px; margin-left: 18px; border-radius: 22px; background: #f0f4f9; display: flex; align-items: center; box-sizing: border-box; padding-left: 9px; flex: none; }
.b { height: 32px; display: flex; align-items: center; justify-content: center; flex: none; }
.w20 { width: 20px; } .w28 { width: 28px; } .w32 { width: 32px; } .w34 { width: 34px; } .w36 { width: 36px; } .w40 { width: 40px; }
.m1 { margin-left: 1px; } .m2 { margin-left: 2px; } .m4 { margin-left: 4px; } .m6 { margin-left: 6px; } .m8 { margin-left: 8px; } .m10 { margin-left: 10px; }
.a1 { margin-left: 16.500px; } .a2 { margin-left: 16.500px; } .a3 { margin-left: 17.500px; }
.hl { background: #edf2fa; border-radius: 6px; }
.lbl { font-size: 15px; color: #444746; white-space: nowrap; flex: none; letter-spacing: .35px; }
.zoomv { width: 42px; margin-left: 8px; }
.c1 { margin-left: 13.500px; }
.c2 { margin-left: 16.500px; }
.c3 { margin-left: 40.500px; }
.style { width: 85px; margin-left: 15px; }
.font { width: 33px; margin-left: 17px; }
.toolbar .sep { width: 1px; height: 22px; background: #c7c7c7; flex: none; }
.fsize { width: 37px; height: 24px; margin-left: 8px; border: 1px solid #747775; border-radius: 4px; box-sizing: border-box; font-size: 14px; color: #1f1f1f; display: flex; align-items: center; justify-content: center; flex: none; }
.bold { width: 33px; height: 33px; margin-left: 4px; background: #d3e3fd; border-radius: 4px; color: #041e49; font: 700 16px Roboto, sans-serif; display: flex; align-items: center; justify-content: center; flex: none; }
.glyph { font-size: 17px; color: #444746; }
.it { font-family: "Liberation Serif", serif; font-style: italic; font-weight: 700; font-size: 19px; }
.un { text-decoration: underline; text-underline-offset: 3px; text-decoration-thickness: 1.500px; font-size: 16px; }
.colorA { flex-direction: column; color: #444746; font-size: 15px; line-height: 15px; }
.colorA i { display: block; width: 24px; height: 5px; background: #000; margin-top: 1px; }
.mode { width: 70px; height: 32px; margin-left: 118px; border-radius: 16px; background: #edf2fa; display: flex; align-items: center; justify-content: center; gap: 7px; flex: none; }
.tbdots { margin-left: 0; fill: #444746; }

/* rulers */
.hruler { height: 18px; margin-top: 9px; flex: none; }
.rnum { font: 11px Roboto, sans-serif; fill: #444746; }
.canvas { flex: 1; display: flex; min-height: 0; position: relative; overflow: hidden; }
.vruler { width: 18px; flex: none; }
.gutter { width: 164px; flex: none; box-sizing: border-box; padding: 17px 0 0 17px; }
.outline { width: 40px; height: 40px; border-radius: 50%; background: #e9eef6; display: flex; align-items: center; justify-content: center; }
.olic { width: 18px; height: 14px; }
.page { width: 900px; flex: none; box-sizing: border-box; background: #fff; border-left: 1px solid #c7c7c7; border-right: 1px solid #c7c7c7; padding: 8px 0 0 106px; color: #000; font-family: "Liberation Sans", Arial, sans-serif; }
.rgut { flex: 1; position: relative; }
.scroll { position: absolute; left: 210px; top: 20px; width: 9px; height: 22px; border-radius: 4px; background: #dadce0; }
.line { font-size: 11.730px; line-height: 13.530px; white-space: nowrap; }
.strong { font-weight: 700; }
.h2 { margin: 11px 0 0; font-size: 17.740px; line-height: 24px; color: #366091; font-weight: 700; }
.swot { width: 377px; height: 126px; margin: 10px 0 0 154px; border: 1.300px solid #000; box-sizing: border-box; display: grid; grid-template-columns: 192px 1fr; grid-template-rows: 61px 1fr; }
.cell { padding: 6px 8px 6px 8.500px; font-size: 14.670px; font-weight: 700; line-height: 18px; position: relative; }
.cell.r { border-left: 1.300px solid #000; }
.cell.d { border-top: 1.300px solid #000; padding-top: 7px; }
.cellmenu { position: absolute; right: 1px; top: 4px; width: 15px; height: 14px; background: #e8e8e8; border: 1px solid #dadada; box-sizing: border-box; display: flex; align-items: center; justify-content: center; }
.caret.tiny { border-width: 4px; border-bottom-width: 0; border-top-color: #666; }
.floater { position: absolute; left: 1060px; top: 0; width: 44px; height: 89px; background: #f9fbfd; border-radius: 0 0 22px 22px; box-shadow: 0 4px 8px rgba(60, 64, 67, .35); display: flex; flex-direction: column; align-items: center; gap: 17px; padding: 8px 0 0 2px; box-sizing: border-box; }
.cal { font: 700 9px Roboto, sans-serif; fill: #4285f4; }
</style>
